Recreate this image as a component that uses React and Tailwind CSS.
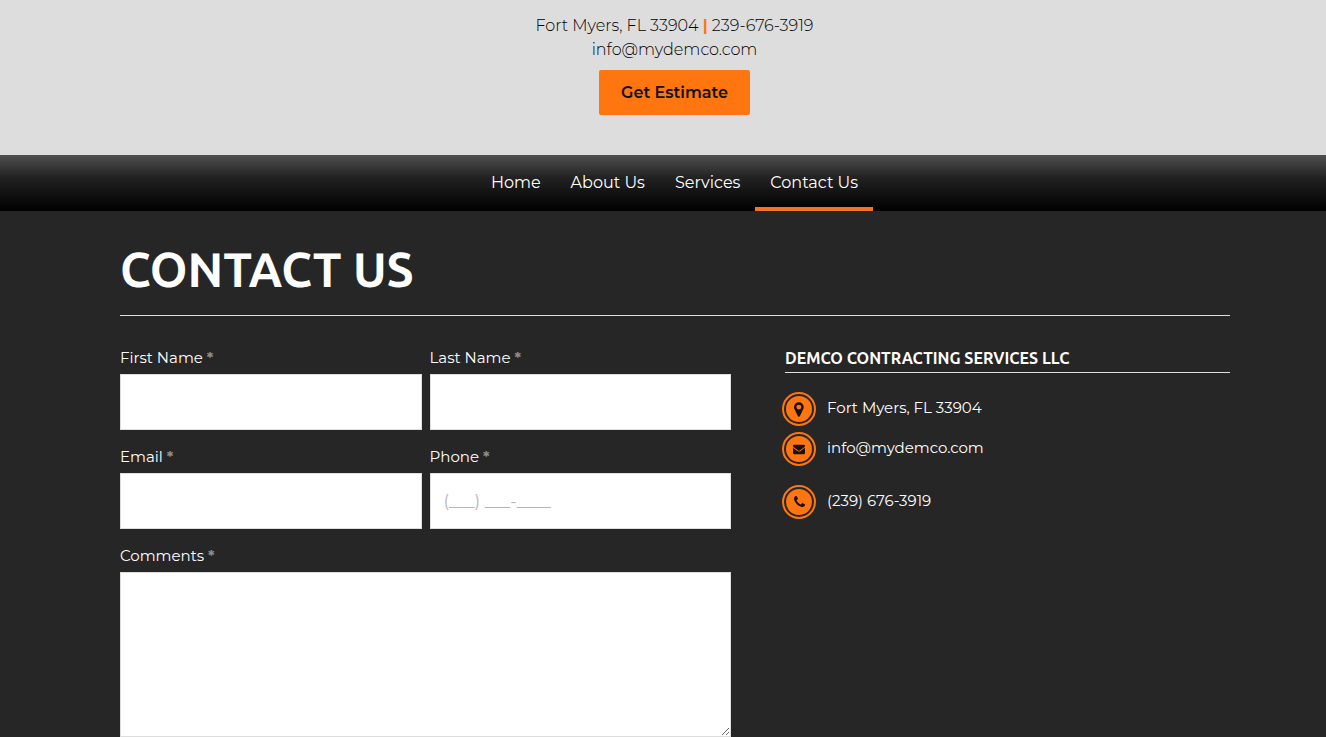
const navItems = [
    { label: 'Home', href: '#home' },
    { label: 'About Us', href: '#about' },
    { label: 'Services', href: '#services' },
    { label: 'Contact Us', href: '#contact', active: true },
];

const MapMarkerIcon = () => (
    <svg viewBox="0 0 1024 1792" className="h-[17px] fill-[#1a1008]" aria-hidden="true">
        <path d="M768 640q0-106-75-181t-181-75-181 75-75 181 75 181 181 75 181-75 75-181zm256 0q0 109-33 179l-364 774q-16 33-47.5 52t-67.5 19-67.5-19-46.5-52l-365-774q-33-70-33-179 0-212 150-362t362-150 362 150 150 362z" />
    </svg>
);

const EnvelopeIcon = () => (
    <svg viewBox="0 0 1792 1792" className="h-3 fill-[#1a1008]" aria-hidden="true">
        <path d="M1792 710v794q0 66-47 113t-113 47h-1472q-66 0-113-47t-47-113v-794q44 49 101 87 362 246 497 345 57 42 92.5 65.5t94.5 48 110 24.5h2q51 0 110-24.5t94.5-48 92.5-65.5q170-123 498-345 57-39 100-87zm0-294q0 79-49 151t-122 123q-376 261-468 325-10 7-42.5 31t-54 38.5-52 32.5-57.5 27-50 9h-2q-23 0-50-9t-57.5-27-52-32.5-54-38.5-42.5-31q-91-64-262-182.5t-205-142.5q-62-42-117-115.5t-55-136.5q0-78 41.5-130t118.5-52h1472q65 0 112.5 47t47.5 113z" />
    </svg>
);

const PhoneIcon = () => (
    <svg viewBox="0 0 1408 1792" className="h-[14px] fill-[#1a1008]" aria-hidden="true">
        <path d="M1408 1240q0 27-10 70.5t-21 68.5q-21 50-122 106-94 51-186 51-27 0-53-3.5t-57.5-12.5-47-14.5-55.5-20.5-49-18q-98-35-175-83-127-79-264-216t-216-264q-48-77-83-175-3-9-18-49t-20.5-55.5-14.5-47-12.5-57.5-3.5-53q0-92 51-186 56-101 106-122 25-11 68.5-21t70.5-10q14 0 21 3 18 6 53 76 11 19 30 54t35 63.5 31 53.5q3 4 17.5 25t21.5 35.5 7 28.5q0 20-28.5 50t-62 55-62 53-28.5 46q0 9 5 22.5t8.5 20.5 14 24 11.5 19q76 137 174 235t235 174q2 1 19 11.5t24 14 20.5 8.5 22.5 5q18 0 46-28.5t53-62 55-62 50-28.5q14 0 28.5 7t35.5 21.5 25 17.5q25 15 53.5 31t63.5 35 54 30q70 35 76 53 3 7 3 21z" />
    </svg>
);

const Field = ({ id, label, type = 'text', placeholder }) => (
    <div>
        <FieldLabel id={id}>{label}</FieldLabel>
        <input
            id={id}
            name={id}
            type={type}
            placeholder={placeholder}
            required
            className="block h-14 w-full border border-[#dddddd] bg-white px-[13px] text-[17px] text-black placeholder:text-[#b5b5b5]"
        />
    </div>
);

const FieldLabel = ({ id, children }) => (
    <label htmlFor={id} className="mb-1 block text-[15px] leading-6">
        {children} <span className="font-bold text-[#8c8c8c]">*</span>
    </label>
);

const ContactRow = ({ icon: Icon, children }) => (
    <div className="flex items-center gap-[11px]">
        <span className="flex size-[34px] shrink-0 items-center justify-center rounded-full border-2 border-[#ff7510] bg-[#ff7510] bg-clip-content p-[2px]">
            <Icon />
        </span>
        <span className="pb-[2px] text-[15px] leading-6">{children}</span>
    </div>
);

const App = () => {
    return (
        <div className="min-h-screen bg-[#262626] font-['Montserrat','Inter',sans-serif] text-white">
            {/* Top bar */}
            <header className="flex flex-col items-center bg-[#dddddd] pt-[14px] pr-[97px] pb-10 pl-[120px] text-center text-black">
                <p className="text-base leading-6 font-light">
                    Fort Myers, FL 33904 <span className="font-bold text-[#ff7510]">|</span> 239-676-3919
                </p>
                <a href="mailto:info@mydemco.com" className="text-base leading-6 font-light">
                    info@mydemco.com
                </a>
                <button
                    type="button"
                    className="mt-2 h-[45px] rounded-xs bg-[#ff7510] px-[22px] text-base font-semibold text-[#111111]"
                >
                    Get Estimate
                </button>
            </header>

            {/* Navigation */}
            <nav className="flex h-14 justify-center bg-linear-to-b/srgb from-[#505050] via-[#222222] via-40% to-black pr-[97px] pl-[120px]">
                {navItems.map((item) => (
                    <a
                        key={item.label}
                        href={item.href}
                        className={`flex items-center border-b-4 px-[15px] pt-[3px] text-base ${item.active ? 'border-[#f47521]' : 'border-transparent'
                            }`}
                    >
                        {item.label}
                    </a>
                ))}
            </nav>

            <main className="pr-24 pl-[120px]">
                <h1 className="border-b border-[#dddddd] pt-[29px] pb-[17px] font-['Ubuntu','Open_Sans',sans-serif] text-[48px] leading-[58px] font-bold uppercase">
                    Contact Us
                </h1>

                <div className="mt-[30px] grid grid-cols-[611fr_445fr] gap-[54px]">
                    {/* Contact form */}
                    <form className="grid grid-cols-2 gap-x-2 gap-y-[15px]">
                        <Field id="firstName" label="First Name" />
                        <Field id="lastName" label="Last Name" />
                        <Field id="email" label="Email" type="email" />
                        <Field id="phone" label="Phone" type="tel" placeholder="(___) ___-____" />
                        <div className="col-span-2">
                            <FieldLabel id="comments">Comments</FieldLabel>
                            <textarea
                                id="comments"
                                name="comments"
                                required
                                className="block h-[165px] w-full border border-[#dddddd] bg-white p-[13px] text-[17px] text-black"
                            />
                        </div>
                    </form>

                    {/* Company details */}
                    <section>
                        <h2 className="border-b border-[#dddddd] pb-[2px] font-['Ubuntu','Open_Sans',sans-serif] text-base leading-6 font-bold uppercase">
                            Demco Contracting Services LLC
                        </h2>
                        <address className="mt-[19px] -ml-[3px] flex flex-col gap-[6px] not-italic">
                            <ContactRow icon={MapMarkerIcon}>Fort Myers, FL 33904</ContactRow>
                            <ContactRow icon={EnvelopeIcon}>
                                <a href="mailto:info@mydemco.com">info@mydemco.com</a>
                            </ContactRow>
                            <div className="mt-[13px]">
                                <ContactRow icon={PhoneIcon}>
                                    <a href="tel:2396763919">(239) 676-3919</a>
                                </ContactRow>
                            </div>
                        </address>
                    </section>
                </div>
            </main>
        </div>
    );
};

export default App;
